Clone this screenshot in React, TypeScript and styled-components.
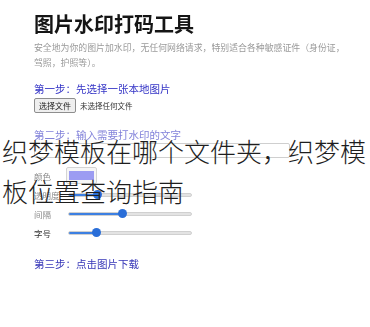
import React from "react";
import styled, { createGlobalStyle } from "styled-components";

const Global = createGlobalStyle`
  html, body { margin: 0; padding: 0; background: #fff; }
  body { font-family: "Noto Sans CJK SC", "Noto Sans", sans-serif; }
`;

const Frame = styled.div`
  position: relative;
  width: 370px;
  height: 327px;
  overflow: hidden;
  background: #fff;
`;

const Page = styled.div`
  padding: 12px 20px 0 34px;
  display: flex;
  flex-direction: column;
  filter: blur(0.35px);
`;

const Title = styled.h1`
  margin: 0;
  font-size: 20px;
  line-height: 24px;
  font-weight: 700;
  color: #151515;
`;

const Intro = styled.p`
  margin: 4px 0 0;
  font-size: 8.9px;
  line-height: 15px;
  color: #9a9a9a;
  white-space: nowrap;
`;

const Step = styled.h2<{ $tone: string }>`
  margin: ${(p) => (p.$tone === "faded" ? "15px" : p.$tone === "dark" ? "15px" : "12px")} 0 0;
  font-size: 10.5px;
  line-height: 14px;
  font-weight: 400;
  color: ${(p) =>
    p.$tone === "faded" ? "#8282da" : p.$tone === "dark" ? "#3636b8" : "#3434c6"};
`;

const FileRow = styled.div`
  margin-top: 2px;
  display: flex;
  align-items: center;
  gap: 4px;
`;

const FileButton = styled.button`
  font-family: inherit;
  font-size: 8px;
  line-height: 11px;
  padding: 1px 4px;
  border: 1px solid #8e8e8e;
  border-radius: 2px;
  background: #efefef;
  color: #222;
`;

const FileName = styled.span`
  font-size: 7.5px;
  color: #333;
`;

const TextField = styled.div`
  margin-top: 1px;
  width: 256px;
  height: 15px;
  border: 1px solid #cfcfcf;
  box-sizing: border-box;
  border-radius: 2px;
`;

const Controls = styled.div`
  margin-top: 8px;
  display: flex;
  flex-direction: column;
`;

const Row = styled.div`
  height: 19px;
  display: flex;
  align-items: center;
`;

const Label = styled.span<{ $dark?: boolean }>`
  width: 32px;
  font-size: 8.5px;
  color: ${(p) => (p.$dark ? "#333" : "#8a8a8a")};
`;

const ColorBox = styled.div`
  width: 31px;
  height: 17px;
  box-sizing: border-box;
  border: 1px solid #d4d4d4;
  border-radius: 2px;
  padding: 3px 2px;
  background: #f6f6f6;
`;

const Swatch = styled.div`
  width: 100%;
  height: 100%;
  background: #9c9cf2;
`;

const Track = styled.div`
  position: relative;
  margin: 0 2px;
  width: 124px;
  height: 4px;
  border-radius: 2px;
  background: #e3e3e3;
  border: 1px solid #d0d0d0;
  box-sizing: border-box;
`;

const Fill = styled.div`
  height: 100%;
  border-radius: 2px;
  background: #3d80e2;
`;

const Thumb = styled.div`
  position: absolute;
  top: 50%;
  width: 9px;
  height: 9px;
  margin: -4.5px 0 0 -4.5px;
  border-radius: 50%;
  background: #2a6ed8;
`;

const Caption = styled.div`
  position: absolute;
  top: 131px;
  left: 2px;
  right: 0;
  font-family: "Noto Sans CJK SC", sans-serif;
  font-size: 26px;
  line-height: 40px;
  font-weight: 300;
  color: #1e1e1e;
`;

function Slider({ label, value, dark }: { label: string; value: number; dark?: boolean }) {
  const pos = 4.5 + value * 115;
  return (
    <Row>
      <Label $dark={dark}>{label}</Label>
      <Track>
        <Fill style={{ width: `${pos}px` }} />
        <Thumb style={{ left: `${pos}px` }} />
      </Track>
    </Row>
  );
}

export default function App() {
  return (
    <Frame>
      <Global />
      <Page>
        <Title>图片水印打码工具</Title>
        <Intro>
          安全地为你的图片加水印，无任何网络请求，特别适合各种敏感证件（身份证，
          <br />
          驾照，护照等）。
        </Intro>
        <Step $tone="main">第一步：先选择一张本地图片</Step>
        <FileRow>
          <FileButton>选择文件</FileButton>
          <FileName>未选择任何文件</FileName>
        </FileRow>
        <Step $tone="faded">第二步：输入需要打水印的文字</Step>
        <TextField />
        <Controls>
          <Row>
            <Label>颜色</Label>
            <ColorBox>
              <Swatch />
            </ColorBox>
          </Row>
          <Slider label="透明度" value={0.21} />
          <Slider label="间隔" value={0.43} />
          <Slider label="字号" value={0.2} dark />
        </Controls>
        <Step $tone="dark">第三步：点击图片下载</Step>
      </Page>
      <Caption>织梦模板在哪个文件夹，织梦模板位置查询指南</Caption>
    </Frame>
  );
}
